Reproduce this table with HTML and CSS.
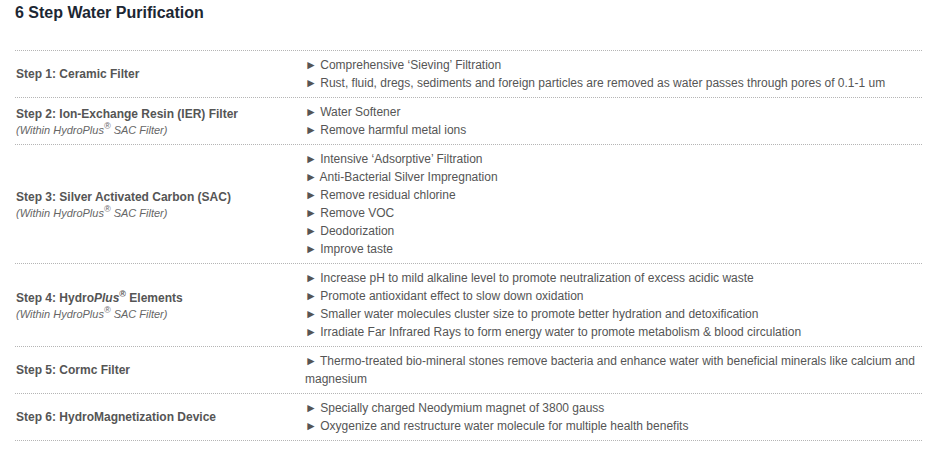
FILE: index.html
```html
<!DOCTYPE html>
<html>
<head>
<meta charset="utf-8">
<link rel="stylesheet" href="styles.css">
</head>
<body>
<div class="page">
  <h2 class="title">6 Step Water Purification</h2>
  <div class="steps">
    <div class="row">
      <div class="label"><div class="name">Step 1: Ceramic Filter</div></div>
      <div class="items">
        <div>► Comprehensive ‘Sieving’ Filtration</div>
        <div>► Rust, fluid, dregs, sediments and foreign particles are removed as water passes through pores of 0.1-1 um</div>
      </div>
    </div>
    <div class="row">
      <div class="label"><div class="name">Step 2: Ion-Exchange Resin (IER) Filter</div><div class="note">(Within HydroPlus<sup>®</sup> SAC Filter)</div></div>
      <div class="items">
        <div>► Water Softener</div>
        <div>► Remove harmful metal ions</div>
      </div>
    </div>
    <div class="row">
      <div class="label"><div class="name">Step 3: Silver Activated Carbon (SAC)</div><div class="note">(Within HydroPlus<sup>®</sup> SAC Filter)</div></div>
      <div class="items">
        <div>► Intensive ‘Adsorptive’ Filtration</div>
        <div>► Anti-Bacterial Silver Impregnation</div>
        <div>► Remove residual chlorine</div>
        <div>► Remove VOC</div>
        <div>► Deodorization</div>
        <div>► Improve taste</div>
      </div>
    </div>
    <div class="row">
      <div class="label"><div class="name">Step 4: Hydro<i>Plus</i><sup>®</sup> Elements</div><div class="note">(Within HydroPlus<sup>®</sup> SAC Filter)</div></div>
      <div class="items">
        <div>► Increase pH to mild alkaline level to promote neutralization of excess acidic waste</div>
        <div>► Promote antioxidant effect to slow down oxidation</div>
        <div>► Smaller water molecules cluster size to promote better hydration and detoxification</div>
        <div>► Irradiate Far Infrared Rays to form energy water to promote metabolism &amp; blood circulation</div>
      </div>
    </div>
    <div class="row">
      <div class="label"><div class="name">Step 5: Cormc Filter</div></div>
      <div class="items">
        <div>► Thermo-treated bio-mineral stones remove bacteria and enhance water with beneficial minerals like calcium and magnesium</div>
      </div>
    </div>
    <div class="row">
      <div class="label"><div class="name">Step 6: HydroMagnetization Device</div></div>
      <div class="items">
        <div>► Specially charged Neodymium magnet of 3800 gauss</div>
        <div>► Oxygenize and restructure water molecule for multiple health benefits</div>
      </div>
    </div>
  </div>
</div>
</body>
</html>
```
FILE: styles.css
```css
html, body {
  margin: 0;
  padding: 0;
  background: #fff;
}
.page {
  padding: 3px 9px 0 15px;
  font-family: "Liberation Sans", Arial, sans-serif;
}
.title {
  margin: 0;
  font-size: 16px;
  line-height: 20px;
  font-weight: bold;
  color: #1c2733;
}
.steps {
  margin-top: 27px;
  border-top: 1px dotted #b5b5b5;
}
.row {
  display: grid;
  grid-template-columns: 290px 1fr;
  border-bottom: 1px dotted #b5b5b5;
  padding: 5px 0;
}
.label {
  display: flex;
  flex-direction: column;
  justify-content: center;
  padding-left: 1px;
}
.name {
  font-size: 12px;
  font-weight: bold;
  color: #555;
  line-height: 18px;
}
.note {
  font-size: 11px;
  font-style: italic;
  color: #666;
  line-height: 14px;
}
sup {
  font-size: 9px;
  line-height: 0;
  vertical-align: 5px;
}
.items {
  font-size: 12px;
  line-height: 18px;
  color: #555;
}
```
